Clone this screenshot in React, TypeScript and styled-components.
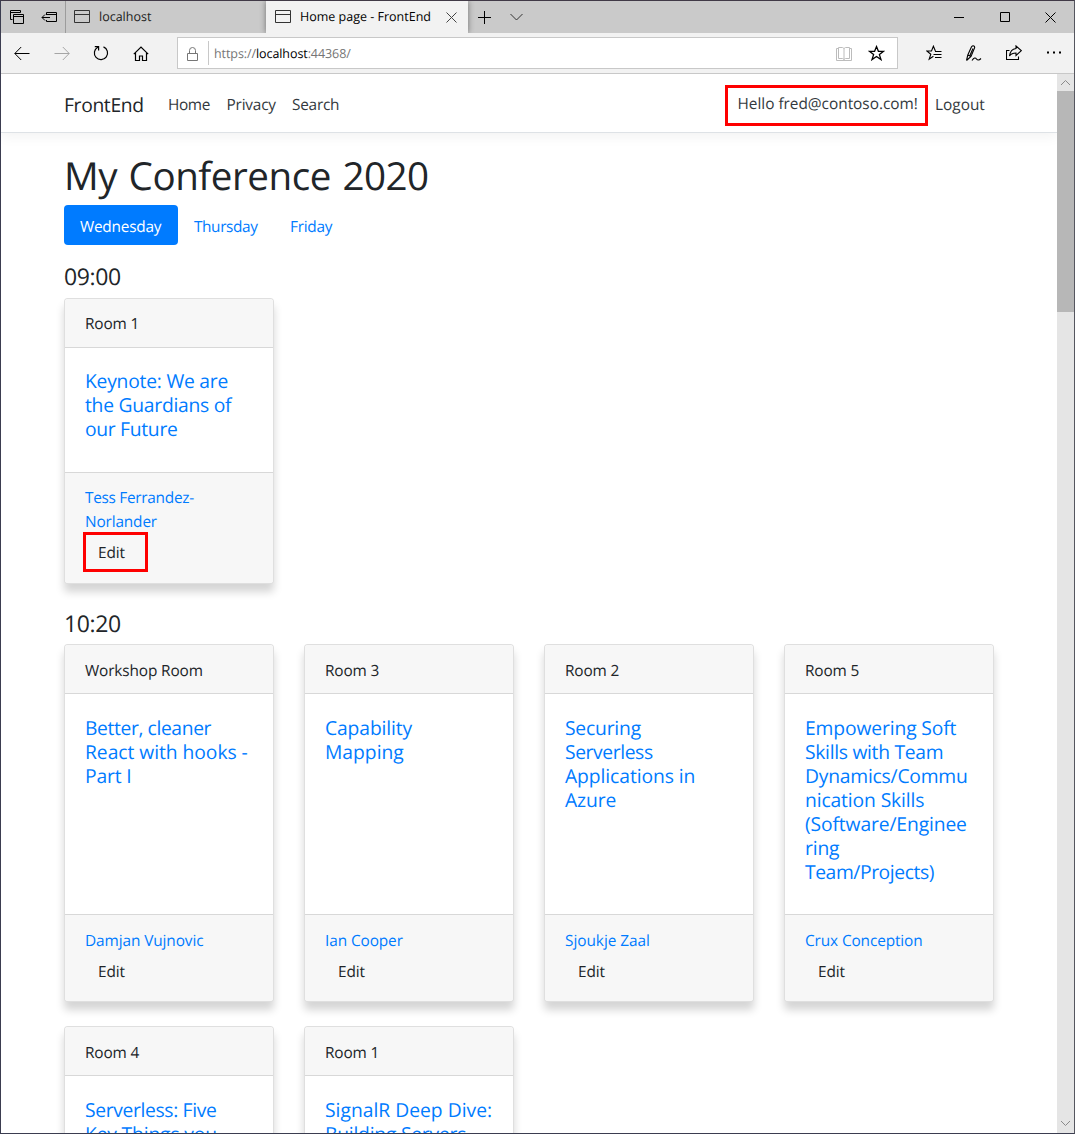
import React from 'react';
import styled, { createGlobalStyle } from 'styled-components';

const GlobalStyle = createGlobalStyle`
  * { box-sizing: border-box; }
  body { margin: 0; background: #fff; }
  body, button { font-family: "Open Sans", "Noto Sans", sans-serif; }
`;

const Window = styled.div`
  display: flex;
  flex-direction: column;
  width: 1075px;
  height: 1134px;
  overflow: hidden;
  border: 1px solid #3b3d50;
  border-top-color: #413a47;
  border-right-color: #55565f;
  color: #212529;
  text-rendering: geometricPrecision;
`;

const Text = styled.span<{ $track?: number }>`
  white-space: nowrap;
  letter-spacing: ${(p) => p.$track ?? 0}px;
`;

/* ---------- browser chrome ---------- */

const TabBar = styled.div`
  display: flex;
  flex: none;
  height: 32px;
  background: #cacaca;
`;

const TabTools = styled.div`
  display: flex;
  width: 65px;
  border-right: 1px solid #9c9c9c;
`;

const Tab = styled.div<{ $active?: boolean }>`
  display: flex;
  position: relative;
  z-index: ${(p) => (p.$active ? 1 : 0)};
  width: ${(p) => (p.$active ? 202 : 200)}px;
  padding-left: ${(p) => (p.$active ? 9 : 8)}px;
  background: ${(p) => (p.$active ? '#f2f2f2' : '#cacaca')};
  box-shadow: ${(p) => (p.$active ? '0 0 6px rgba(0, 0, 0, 0.45)' : 'none')};
  clip-path: inset(0 -8px 0 -8px);
  color: ${(p) => (p.$active ? '#000' : '#222')};
  font-size: 12.5px;
  line-height: 31px;
`;

const TabLabel = styled(Text)`
  margin-left: 9px;
`;

const Toolbar = styled.div`
  display: flex;
  flex: none;
  height: 41px;
  background: #f2f2f2;
  border-bottom: 1px solid #c8c8c8;
`;

const AddressBar = styled.div`
  display: flex;
  width: 721px;
  height: 32px;
  margin: 4px 0 0 28px;
  padding-right: 12px;
  border: 1px solid #c8c8c8;
  background: #fff;
`;

const AddressDivider = styled.div`
  width: 1px;
  height: 24px;
  margin: 3px 5px 0 9px;
  background: #c8c8c8;
`;

const Url = styled(Text)`
  flex: 1;
  color: #757575;
  font-size: 12.5px;
  line-height: 31px;
  b { color: #000; font-weight: 400; }
`;

const Svg = styled.svg<{ $gap?: number; $top?: number; $tone?: string; $stroke?: number }>`
  display: block;
  flex: none;
  margin-left: ${(p) => p.$gap ?? 0}px;
  margin-top: ${(p) => p.$top ?? 0}px;
  fill: none;
  stroke: ${(p) => p.$tone ?? '#000'};
  stroke-width: ${(p) => p.$stroke ?? 1};
`;

type IconProps = { w: number; h: number; gap?: number; top?: number; tone?: string; stroke?: number; children: React.ReactNode };
const Icon = ({ w, h, gap, top, tone, stroke, children }: IconProps) => (
  <Svg width={w} height={h} viewBox={`0 0 ${w} ${h}`} $gap={gap} $top={top} $tone={tone} $stroke={stroke}>
    {children}
  </Svg>
);

const PageIcon = () => (
  <Icon w={16} h={13} top={9} tone="#333">
    <path d="M.5 .5h15v12H.5zM.5 4.5h15" />
  </Icon>
);

/* ---------- page ---------- */

const Viewport = styled.div`
  display: flex;
  flex: 1;
  min-height: 0;
`;

const Page = styled.div`
  flex: 1;
  overflow: hidden;
  background: #fff;
`;

const ScrollTrack = styled.div`
  display: flex;
  flex-direction: column;
  justify-content: space-between;
  width: 17px;
  background: #e5e5e5;
`;

const ScrollThumb = styled.div`
  height: 221px;
  background: #b7b7b7;
`;

const ScrollTop = styled.div`
  display: flex;
  flex-direction: column;
`;

const ScrollButton = styled.div`
  height: 17px;
`;

const Navbar = styled.nav`
  display: flex;
  align-items: flex-start;
  height: 59px;
  margin-bottom: 16px;
  padding: 19px 71px 0 63px;
  border-bottom: 1px solid #dee2e6;
  box-shadow: 0 4px 12px rgba(0, 0, 0, 0.05);
  font-size: 15.4px;
  line-height: 24px;
`;

const Brand = styled(Text)`
  width: 104px;
  font-size: 19.3px;
`;

const NavLink = styled(Text)<{ $w: number }>`
  flex: none;
  width: ${(p) => p.$w}px;
  color: #343a40;
`;

const Spacer = styled.div`
  flex: 1;
`;

const UserName = styled.div`
  position: relative;
  width: 198px;
  margin-top: -1px;
  padding-left: 0.5px;
  color: #343a40;
`;

const Highlight = styled.div<{ $x: number; $y: number; $w: number; $h: number }>`
  position: absolute;
  left: ${(p) => p.$x}px;
  top: ${(p) => p.$y}px;
  width: ${(p) => p.$w}px;
  height: ${(p) => p.$h}px;
  border: 3px solid #fe0000;
`;

const Container = styled.main`
  padding: 0 63px;
`;

const Title = styled.h1`
  height: 48px;
  margin: 0 0 8px;
  padding-top: 3px;
  font-size: 38.6px;
  font-weight: 400;
  line-height: 48px;
  word-spacing: 2px;
`;

const Pills = styled.div`
  display: flex;
  margin-bottom: 17px;
`;

const Pill = styled.a<{ $active?: boolean; $w: number }>`
  width: ${(p) => p.$w}px;
  height: 40px;
  padding: 10px 0 0 16px;
  border-radius: 4px;
  background: ${(p) => (p.$active ? '#007bff' : 'transparent')};
  color: ${(p) => (p.$active ? '#fff' : '#007bff')};
  font-size: 15.4px;
  line-height: 24px;
`;

const Slot = styled.section`
  margin-bottom: 0.4px;
`;

const Time = styled.h4`
  height: 28px;
  margin: 0 0 8px;
  padding-top: 0.2px;
  font-size: 23px;
  font-weight: 400;
  line-height: 29px;
`;

const Grid = styled.div`
  display: grid;
  grid-template-columns: repeat(4, 210px);
  column-gap: 30px;
`;

const Card = styled.article`
  display: flex;
  flex-direction: column;
  margin-bottom: 24px;
  border: 1px solid rgba(0, 0, 0, 0.125);
  border-radius: 4px;
  background: #fff;
  background-clip: border-box;
  box-shadow: 0 8px 9px rgba(0, 0, 0, 0.17);
  font-size: 15.4px;
  line-height: 24px;
`;

const CardHeader = styled.header`
  height: 49px;
  padding: 13.2px 20px 0;
  border-bottom: 1px solid rgba(0, 0, 0, 0.125);
  background: #f7f7f7;
  border-radius: 3px 3px 0 0;
`;

const CardBody = styled.div`
  flex: 1;
  padding: 21.2px 20px 30.8px;
`;

const SessionLink = styled.a`
  display: flex;
  flex-direction: column;
  color: #007bff;
  font-size: 19.3px;
  line-height: 24px;
`;

const CardFooter = styled.footer`
  padding: 13.2px 20px 11.8px;
  border-top: 1px solid rgba(0, 0, 0, 0.125);
  background: #f7f7f7;
  border-radius: 0 0 3px 3px;
`;

const Speaker = styled.a`
  display: flex;
  flex-direction: column;
  color: #007bff;
`;

const EditRow = styled.div`
  position: relative;
  height: 37px;
  padding: 7px 0 0 13px;
`;

type Line = [string, number];
type Session = { room: Line; title: Line[]; speaker: Line[]; marked?: boolean };

const lines = (ls: Line[]) => ls.map(([t, k]) => <Text key={t} $track={k}>{t}</Text>);

const SessionCard = ({ room, title, speaker, marked }: Session) => (
  <Card>
    <CardHeader><Text $track={room[1]}>{room[0]}</Text></CardHeader>
    <CardBody><SessionLink>{lines(title)}</SessionLink></CardBody>
    <CardFooter>
      <Speaker>{lines(speaker)}</Speaker>
      <EditRow>
        <Text $track={-0.1}>Edit</Text>
        {marked && <Highlight $x={-2} $y={-2} $w={65} $h={40} />}
      </EditRow>
    </CardFooter>
  </Card>
);

const schedule: { time: string; sessions: Session[] }[] = [
  {
    time: '09:00',
    sessions: [
      {
        room: ['Room 1', -0.15],
        title: [['Keynote: We are', -0.23], ['the Guardians of', -0.26], ['our Future', -0.3]],
        speaker: [['Tess Ferrandez-', -0.29], ['Norlander', -0.15]],
        marked: true,
      },
    ],
  },
  {
    time: '10:20',
    sessions: [
      {
        room: ['Workshop Room', -0.14],
        title: [['Better, cleaner', -0.39], ['React with hooks -', -0.05], ['Part I', -0.15]],
        speaker: [['Damjan Vujnovic', -0.1]],
      },
      { room: ['Room 3', -0.15], title: [['Capability', -0.12], ['Mapping', 0]], speaker: [['Ian Cooper', -0.1]] },
      {
        room: ['Room 2', -0.15],
        title: [['Securing', -0.2], ['Serverless', -0.4], ['Applications in', -0.08], ['Azure', -0.1]],
        speaker: [['Sjoukje Zaal', -0.04]],
      },
      {
        room: ['Room 5', -0.15],
        title: [
          ['Empowering Soft', -0.13],
          ['Skills with Team', -0.3],
          ['Dynamics/Commu', -0.22],
          ['nication Skills', -0.13],
          ['(Software/Enginee', -0.13],
          ['ring', -0.15],
          ['Team/Projects)', -0.42],
        ],
        speaker: [['Crux Conception', -0.12]],
      },
      { room: ['Room 4', -0.15], title: [['Serverless: Five', -0.35], ['Key Things you', -0.17]], speaker: [] },
      { room: ['Room 1', -0.15], title: [['SignalR Deep Dive:', 0], ['Building Servers', -0.23]], speaker: [] },
    ],
  },
];

export default function App() {
  return (
    <Window>
      <GlobalStyle />
      <TabBar>
        <TabTools>
          <Icon w={15} h={15} gap={9} top={9}>
            <path d="M2.5 9.5H.5V.5h10v2M.5 2.5h10" />
            <path d="M3.5 4.5h10v9h-10zM3.5 6.5h10" />
          </Icon>
          <Icon w={17} h={12} gap={16} top={10}>
            <path d="M5.5 4V1.5h10v9h-10V9M5.5 3.5h10M1 6.5h8M4 3.5l-3 3 3 3" />
          </Icon>
        </TabTools>
        <Tab>
          <PageIcon />
          <TabLabel>localhost</TabLabel>
        </Tab>
        <Tab $active>
          <PageIcon />
          <TabLabel>Home page - FrontEnd</TabLabel>
          <Icon w={11} h={11} gap={15} top={11} tone="#444">
            <path d="M.5 .5l10 10M10.500 .5l-10 10" />
          </Icon>
        </Tab>
        <Icon w={13} h={13} gap={10} top={10}>
          <path d="M6.500 0v13M0 6.500h13" />
        </Icon>
        <Icon w={13} h={8} gap={19} top={12} tone="#333">
          <path d="M.5 1l6 6 6-6" />
        </Icon>
        <Spacer />
        <Icon w={10} h={11} top={11}>
          <path d="M0 5.500h10" />
        </Icon>
        <Icon w={10} h={10} gap={36} top={11}>
          <path d="M.5 .5h9v9h-9z" />
        </Icon>
        <Icon w={11} h={11} gap={35} top={11}>
          <path d="M.5 .5l10 10M10.500 .5l-10 10" />
        </Icon>
        <Icon w={18} h={1}>{null}</Icon>
      </TabBar>
      <Toolbar>
        <Icon w={16} h={14} gap={13} top={13}>
          <path d="M15.500 7.500H.9M7.200 1L.8 7.500 7.200 14" />
        </Icon>
        <Icon w={16} h={14} gap={24} top={13} tone="#a5a5a5">
          <path d="M.5 7.500h14.600M8.800 1l6.400 6.500L8.800 14" />
        </Icon>
        <Icon w={16} h={16} gap={23} top={12} stroke={1.2}>
          <path d="M10.500 1.900A6.600 6.600 0 1 1 4.800 2.200M1.800 1.600H5.600V5.600" />
        </Icon>
        <Icon w={16} h={15} gap={24} top={13} stroke={1.2}>
          <path d="M.8 8.200L8 1l7.200 7.200M2.500 7v7.500h4v-4.500h3v4.500h4V7" />
        </Icon>
        <AddressBar>
          <Icon w={11} h={14} gap={9} top={9} tone="#767676">
            <path d="M.5 6.500h10v7H.5zM2.500 6.500V3.500a3 3 0 0 1 6 0v3" />
          </Icon>
          <Icon w={1} h={1}>{null}</Icon>
          <AddressDivider />
          <Url $track={-0.08}>https://<b>localhost</b>:44368/</Url>
          <Icon w={16} h={14} top={9} tone="#bcbcbc">
            <path d="M2.500 .5h4l1.500 1 1.500-1h4v11h-4l-1.500 1-1.500-1h-4zM8 1.500v11M2.500 1.500h-2v12h15v-12h-2" />
          </Icon>
          <Icon w={17} h={16} gap={16} top={7} stroke={1.3}>
            <path d="M8.500 1.600l1.900 4.700h5.200l-4.200 3.300 1.600 5-4.500-3.100-4.500 3.100 1.600-5L1.400 6.300h5.200z" />
          </Icon>
        </AddressBar>
        <Icon w={16} h={16} gap={28} top={12} stroke={1.1}>
          <path d="M9.400 6L7.400 1.200 5.500 6H.8l4 3.200-1.600 5 4.200-3M9 6.500h6.500M7.500 9.500h8M9 12.500h6.500" />
        </Icon>
        <Icon w={17} h={17} gap={23} top={12} stroke={1.1}>
          <path d="M1.500 15.500L2.800 10 6.500 1.800q1.200-1.600 2.400-.8t.5 2.400L6 11.500 1.500 15.500M2.800 10l3.200 1.500M7 15.500c2-3 3.500-3 4.500-1.500s2.500 1.500 4.500-.5M8 3.500l-3.200 7.200" />
        </Icon>
        <Icon w={16} h={16} gap={24} top={12} stroke={1.1}>
          <path d="M3.500 5.500h-3v9h12v-3M10 1l5.300 4.700L10 10.500V8C7 8 5 8.800 3.500 11 4 7 6 4 10 3.500z" />
        </Icon>
        <Icon w={16} h={3} gap={24} top={18}>
          <path d="M1 1.500h2M7 1.500h2M13 1.500h2" strokeWidth={2} />
        </Icon>
      </Toolbar>
      <Viewport>
        <Page>
          <Navbar>
            <Brand $track={-0.35}>FrontEnd</Brand>
            <NavLink $w={58.5} $track={-0.4}>Home</NavLink>
            <NavLink $w={65.5} $track={-0.2}>Privacy</NavLink>
            <NavLink $w={48} $track={-0.25}>Search</NavLink>
            <Spacer />
            <UserName>
              <Text $track={-0.02}>Hello fred@contoso.com!</Text>
              <Highlight $x={-12} $y={-7} $w={203} $h={41} />
            </UserName>
            <NavLink $w={51} $track={0}>Logout</NavLink>
          </Navbar>
          <Container>
            <Title><Text $track={-0.48}>My Conference 2020</Text></Title>
            <Pills>
              <Pill $active $w={114}><Text $track={-0.24}>Wednesday</Text></Pill>
              <Pill $w={96}><Text $track={-0.4}>Thursday</Text></Pill>
              <Pill $w={74}><Text $track={-0.27}>Friday</Text></Pill>
            </Pills>
            {schedule.map((slot) => (
              <Slot key={slot.time}>
                <Time><Text $track={-0.35}>{slot.time}</Text></Time>
                <Grid>
                  {slot.sessions.map((s) => (
                    <SessionCard key={s.title[0][0]} {...s} />
                  ))}
                </Grid>
              </Slot>
            ))}
          </Container>
        </Page>
        <ScrollTrack>
          <ScrollTop>
            <ScrollButton>
              <Icon w={11} h={12} gap={3} tone="#8a8a8a">
                <path d="M1 11l4.500-4.500L10 11" />
              </Icon>
            </ScrollButton>
            <ScrollThumb />
          </ScrollTop>
          <ScrollButton>
            <Icon w={11} h={12} gap={3} tone="#8a8a8a">
              <path d="M1 5l4.500 4.500L10 5" />
            </Icon>
          </ScrollButton>
        </ScrollTrack>
      </Viewport>
    </Window>
  );
}
